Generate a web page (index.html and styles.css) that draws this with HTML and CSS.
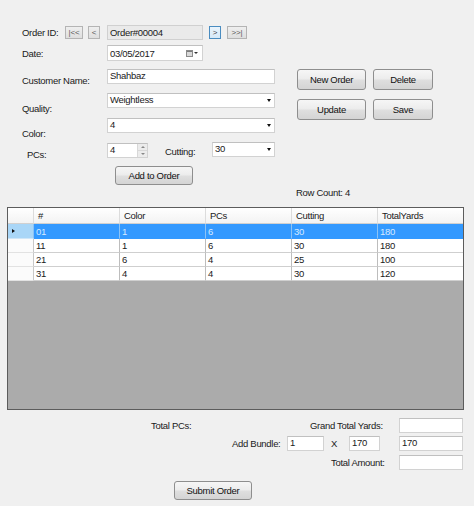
FILE: index.html
```html
<!DOCTYPE html>
<html>
<head>
<meta charset="utf-8">
<link rel="stylesheet" href="styles.css">
</head>
<body>
<div class="top">
  <div class="left">
    <div class="row r1">
      <span class="lbl w-order">Order ID:</span>
      <span class="nav n-first">|&lt;&lt;</span>
      <span class="nav n-prev">&lt;</span>
      <div class="tb ro order">Order#00004</div>
      <span class="nav n-next hot">&gt;</span>
      <span class="nav n-last">&gt;&gt;|</span>
    </div>
    <div class="row r2">
      <span class="lbl w-lab">Date:</span>
      <div class="tb date">
        <span class="tb-text">03/05/2017</span>
        <span class="cal"><span class="cal-top"></span></span>
        <span class="dd-small"></span>
      </div>
    </div>
    <div class="row r3">
      <span class="lbl w-lab off55">Customer Name:</span>
      <div class="tb wide">Shahbaz</div>
    </div>
    <div class="row r4">
      <span class="lbl w-lab off95">Quality:</span>
      <div class="tb combo wide"><span class="tb-text">Weightless</span><span class="arrow"></span></div>
    </div>
    <div class="row r5">
      <span class="lbl w-lab off95">Color:</span>
      <div class="tb combo wide"><span class="tb-text">4</span><span class="arrow"></span></div>
    </div>
    <div class="row r6">
      <span class="lbl w-pcs off65">PCs:</span>
      <div class="tb num">
        <span class="tb-text">4</span>
        <span class="spin"><span class="spin-up"><span class="tri-up"></span></span><span class="spin-dn"><span class="tri-dn"></span></span></span>
      </div>
      <span class="lbl w-cut off35">Cutting:</span>
      <div class="tb combo cut"><span class="tb-text">30</span><span class="arrow"></span></div>
    </div>
    <div class="row r7">
      <div class="btn add">Add to Order</div>
    </div>
  </div>
  <div class="right">
    <div class="row">
      <div class="btn b1">New Order</div>
      <div class="btn b2">Delete</div>
    </div>
    <div class="row rb2">
      <div class="btn b1">Update</div>
      <div class="btn b2">Save</div>
    </div>
  </div>
</div>

<div class="rowcount">Row Count: 4</div>

<div class="grid">
  <div class="dg-row dg-head">
    <div class="c rh"></div>
    <div class="c">#</div>
    <div class="c">Color</div>
    <div class="c">PCs</div>
    <div class="c">Cutting</div>
    <div class="c">TotalYards</div>
  </div>
  <div class="dg-row dg-data sel first">
    <div class="c rh"><span class="cur"></span></div>
    <div class="c">01</div>
    <div class="c">1</div>
    <div class="c">6</div>
    <div class="c">30</div>
    <div class="c">180</div>
  </div>
  <div class="dg-row dg-data">
    <div class="c rh"></div>
    <div class="c">11</div>
    <div class="c">1</div>
    <div class="c">6</div>
    <div class="c">30</div>
    <div class="c">180</div>
  </div>
  <div class="dg-row dg-data">
    <div class="c rh"></div>
    <div class="c">21</div>
    <div class="c">6</div>
    <div class="c">4</div>
    <div class="c">25</div>
    <div class="c">100</div>
  </div>
  <div class="dg-row dg-data">
    <div class="c rh"></div>
    <div class="c">31</div>
    <div class="c">4</div>
    <div class="c">4</div>
    <div class="c">30</div>
    <div class="c">120</div>
  </div>
</div>

<div class="bottom">
  <div class="brow ba">
    <span class="lbl bw-tp">Total PCs:</span>
    <span class="lbl bw-gty">Grand Total Yards:</span>
    <div class="tb tot"></div>
  </div>
  <div class="brow bb">
    <span class="lbl bw-ab">Add Bundle:</span>
    <div class="tb bun1">1</div>
    <span class="lbl bw-x">X</span>
    <div class="tb bun2">170</div>
    <div class="tb tot bun3">170</div>
  </div>
  <div class="brow bc">
    <span class="lbl bw-ta">Total Amount:</span>
    <div class="tb tot"></div>
  </div>
  <div class="brow bd">
    <div class="btn submit">Submit Order</div>
  </div>
</div>
</body>
</html>
```

FILE: styles.css
```css
html, body {
  margin: 0;
  padding: 0;
}
body {
  width: 474px;
  height: 506px;
  overflow: hidden;
  background: #f0f0f0;
  font-family: "Liberation Sans", Arial, sans-serif;
  font-size: 9.5px;
  letter-spacing: -0.3px;
  color: #1a1a1a;
}

.top {
  display: flex;
  padding: 25px 0 0 22px;
}
.left {
  width: 253px;
  display: flex;
  flex-direction: column;
}
.row {
  display: flex;
}
.lbl {
  line-height: 11px;
  white-space: nowrap;
  flex: none;
}
.w-order { width: 43px; }
.w-lab { width: 85px; }
.w-pcs { width: 80px; margin-left: 5px; }
.w-cut { width: 47px; margin-left: 17px; }
.off55 { align-self: flex-start; margin-top: 5.5px; }
.off95 { align-self: flex-start; margin-top: 9.5px; }
.off65 { align-self: flex-start; margin-top: 6.5px; }
.off35 { align-self: flex-start; margin-top: 3.5px; }

.r1 { height: 15px; align-items: center; }
.r2 { height: 16px; align-items: center; margin-top: 5px; }
.r3 { height: 15px; margin-top: 8px; }
.r4 { height: 15px; margin-top: 9px; }
.r5 { height: 15px; margin-top: 10px; }
.r6 { height: 16px; margin-top: 9px; }
.r7 { margin-top: 8px; }

/* nav buttons */
.nav {
  box-sizing: border-box;
  height: 13px;
  border: 1px solid #b4b4b4;
  background: linear-gradient(#efefef, #dedede);
  color: #5a5a5a;
  font-size: 8px;
  letter-spacing: -0.2px;
  display: flex;
  align-items: center;
  justify-content: center;
  flex: none;
}
.n-first { width: 18px; }
.n-prev { width: 12px; margin-left: 5px; }
.n-next { width: 12px; margin-left: 6px; }
.n-last { width: 20px; margin-left: 6px; }
.hot {
  border-color: #4a8cc0;
  background: linear-gradient(#eaf4fc, #d6e9f8);
  color: #444;
}

/* text boxes */
.tb {
  box-sizing: border-box;
  height: 15px;
  background: #fff;
  border: 1px solid #d2d2d2;
  border-top-color: #c0c0c0;
  padding: 0 2px;
  line-height: 12px;
  white-space: nowrap;
  display: flex;
  align-items: flex-start;
  flex: none;
}
.tb-text { flex: 1; }
.ro {
  background: #eaeaea;
  border-color: #d0d0d0;
}
.order { width: 96px; margin-left: 7px; line-height: 13px; }
.date { width: 96px; height: 16px; align-items: center; line-height: 13px; }
.wide { width: 168px; line-height: 12px; }
.num { width: 41px; margin-top: 1px; padding-right: 0; }
.cut { width: 63px; }

.combo .arrow {
  width: 0;
  height: 0;
  border-left: 2.5px solid transparent;
  border-right: 2.5px solid transparent;
  border-top: 3px solid #111;
  align-self: center;
  margin-right: 1px;
}

.cal {
  box-sizing: border-box;
  width: 7px;
  height: 7px;
  border: 1px solid #8a8a8a;
  background: #d9d9d9;
  display: flex;
  flex-direction: column;
  margin-right: 1px;
}
.cal-top {
  height: 1px;
  background: #7c7c7c;
}
.dd-small {
  width: 0;
  height: 0;
  border-left: 2px solid transparent;
  border-right: 2px solid transparent;
  border-top: 2px solid #333;
  margin-right: 2px;
}

.spin {
  width: 9px;
  align-self: stretch;
  display: flex;
  flex-direction: column;
  border-left: 1px solid #d8d8d8;
}
.spin-up, .spin-dn {
  flex: 1;
  background: #ececec;
  display: flex;
  align-items: center;
  justify-content: center;
}
.spin-up { border-bottom: 1px solid #d8d8d8; }
.tri-up {
  width: 0; height: 0;
  border-left: 2px solid transparent;
  border-right: 2px solid transparent;
  border-bottom: 2px solid #888;
}
.tri-dn {
  width: 0; height: 0;
  border-left: 2px solid transparent;
  border-right: 2px solid transparent;
  border-top: 2px solid #888;
}

/* buttons */
.btn {
  box-sizing: border-box;
  border: 1px solid #8e8e8e;
  border-radius: 3px;
  background: linear-gradient(#f6f6f6 0%, #ececec 48%, #dfdfdf 52%, #d4d4d4 100%);
  display: flex;
  align-items: center;
  justify-content: center;
  color: #111;
  flex: none;
}
.add { width: 78px; height: 19px; margin-left: 93px; }

.right {
  margin-left: 22px;
  margin-top: 44px;
}
.b1 { width: 69px; height: 21px; }
.b2 { width: 60px; height: 21px; margin-left: 7px; }
.rb2 { margin-top: 9px; }

.rowcount {
  margin: 2px 0 0 296px;
  line-height: 11px;
}

/* data grid */
.grid {
  box-sizing: border-box;
  width: 457px;
  height: 203px;
  margin: 9px 0 0 7px;
  border: 1px solid #5c5c5c;
  background: #ababab;
}
.dg-row {
  display: grid;
  grid-template-columns: 26px 86px 86px 86px 86px 85px;
}
.c {
  box-sizing: border-box;
  border-right: 1px solid #bdbdbd;
  border-bottom: 1px solid #cfcfcf;
  background: #fff;
  padding-left: 2px;
  white-space: nowrap;
  display: flex;
  align-items: center;
}
.c:last-child { border-right: none; }
.dg-head { height: 16px; }
.dg-head .c {
  background: linear-gradient(#ffffff, #f3f3f3);
  padding-left: 4px;
  border-right-color: #dcdcdc;
  border-bottom-color: #d0d0d0;
}
.dg-data { height: 14px; }
.dg-data.first { height: 15px; }
.dg-data .rh {
  background: #fbfbfb;
  border-right-color: #c8c8c8;
  border-bottom-color: #e2e2e2;
}
.sel .c {
  background: #3399ff;
  color: #d6eaff;
  border-bottom-color: #3399ff;
  border-right-color: #8cc3f5;
}
.sel .rh {
  background: #a9d6f7;
  border-bottom-color: #cfe6f8;
}
.cur {
  width: 0;
  height: 0;
  border-top: 2.5px solid transparent;
  border-bottom: 2.5px solid transparent;
  border-left: 3px solid #111;
  margin-left: 2px;
}

/* bottom section */
.brow {
  display: flex;
  align-items: center;
}
.ba { margin: 8px 0 0 151px; height: 15px; }
.bb { margin: 3px 0 0 232px; height: 15px; }
.bc { margin: 4px 0 0 331px; height: 15px; }
.bd { margin: 11px 0 0 174px; }
.bw-tp { width: 159px; }
.bw-gty { width: 89px; }
.bw-ab { width: 55px; }
.bw-x { width: 25px; padding-left: 7px; box-sizing: border-box; }
.bw-ta { width: 68px; }
.tot { width: 64px; }
.bun1 { width: 37px; }
.bun2 { width: 31px; }
.bun3 { margin-left: 19px; }
.submit { width: 78px; height: 19px; }
```
